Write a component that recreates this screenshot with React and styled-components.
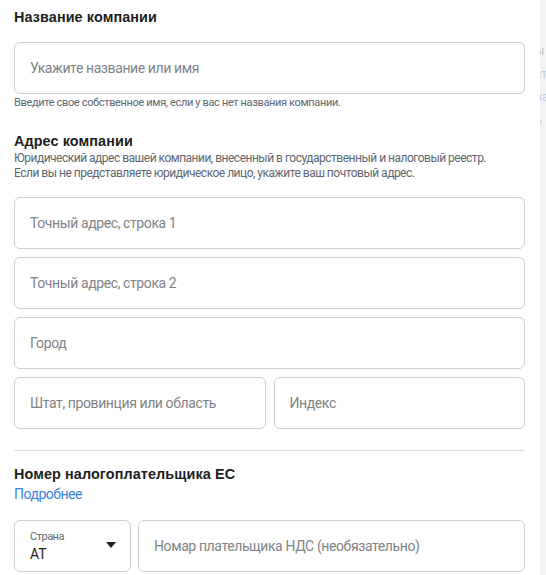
import styled, { createGlobalStyle } from "styled-components";

const GlobalStyle = createGlobalStyle`
    body {
        margin: 0;
        background: #ffffff;
        font-family: Roboto, "Liberation Sans", Arial, sans-serif;
        color: #1c1e21;
    }
`;

const Page = styled.div`
    display: flex;
    width: 546px;
    height: 575px;
    overflow: hidden;
`;

const Form = styled.main`
    width: 540px;
    box-sizing: border-box;
    padding: 7px 15px 0 14px;
    background: #ffffff;
    display: flex;
    flex-direction: column;
`;

const Side = styled.aside`
    flex: 1;
    background: #f2f3f5;
    overflow: hidden;
    display: flex;
    flex-direction: column;
    padding-top: 44px;
    gap: 9px;
`;

const SideText = styled.span`
    margin-left: -5px;
    font-family: Roboto, Arial, sans-serif;
    font-size: 12px;
    line-height: 14px;
    color: ${(p) => (p.$link ? "#b9cbe4" : "#c3c6cb")};
    white-space: nowrap;
`;

const Title = styled.h2`
    margin: ${(p) => p.$margin || "0"};
    font-family: "Liberation Sans", Arial, sans-serif;
    font-weight: 700;
    font-size: 14.4px;
    line-height: 20px;
    letter-spacing: 0.1px;
    color: #1c1e21;
`;

const Help = styled.p`
    margin: ${(p) => p.$margin || "0"};
    font-size: ${(p) => (p.$small ? "11px" : "12px")};
    line-height: ${(p) => (p.$small ? "14px" : "15px")};
    letter-spacing: ${(p) => (p.$small ? "-0.35px" : "-0.5px")};
    color: #606770;
`;

const Field = styled.div`
    box-sizing: border-box;
    height: 52px;
    border: 1px solid #ccd0d5;
    border-radius: 6px;
    background: #ffffff;
    display: flex;
    align-items: center;
    padding: 0 15px;
    min-width: 0;
    flex: ${(p) => p.$flex || "initial"};
`;

const Placeholder = styled.span`
    font-size: 14px;
    letter-spacing: -0.4px;
    color: #808387;
    white-space: nowrap;
`;

const Stack = styled.div`
    display: flex;
    flex-direction: column;
    gap: 8px;
    margin-top: ${(p) => p.$top || "0"};
`;

const Row = styled.div`
    display: flex;
    gap: ${(p) => p.$gap || "8px"};
`;

const Divider = styled.hr`
    margin: 21px 0 13px;
    border: none;
    border-top: 1px solid #dadde1;
    height: 0;
`;

const Link = styled.a`
    font-size: 14px;
    letter-spacing: -0.5px;
    line-height: 20px;
    color: #3b82e0;
    text-decoration: none;
    align-self: flex-start;
    margin-bottom: 16px;
`;

const Select = styled.div`
    box-sizing: border-box;
    width: 117px;
    height: 52px;
    border: 1px solid #ccd0d5;
    border-radius: 6px;
    display: flex;
    align-items: center;
    justify-content: space-between;
    padding: 0 14px 0 15px;
`;

const SelectValue = styled.div`
    display: flex;
    flex-direction: column;
    padding-top: 2px;
`;

const SelectLabel = styled.span`
    font-size: 11px;
    letter-spacing: -0.5px;
    line-height: 14px;
    color: #606770;
`;

const SelectText = styled.span`
    font-size: 14px;
    line-height: 20px;
    color: #1c1e21;
`;

const Caret = styled.svg`
    width: 10px;
    height: 6px;
    fill: #1c1e21;
    margin-bottom: 2px;
`;

function App() {
    return (
        <Page>
            <GlobalStyle />
            <Form>
                <Title>Название компании</Title>
                <Stack $top="15px">
                    <Field>
                        <Placeholder>Укажите название или имя</Placeholder>
                    </Field>
                </Stack>
                <Help $small $margin="2px 0 0">
                    Введите свое собственное имя, если у вас нет названия компании.
                </Help>

                <Title $margin="21px 0 0">Адрес компании</Title>
                <Help>
                    Юридический адрес вашей компании, внесенный в государственный и налоговый реестр.
                    <br />
                    Если вы не представляете юридическое лицо, укажите ваш почтовый адрес.
                </Help>
                <Stack $top="16px">
                    <Field>
                        <Placeholder>Точный адрес, строка 1</Placeholder>
                    </Field>
                    <Field>
                        <Placeholder>Точный адрес, строка 2</Placeholder>
                    </Field>
                    <Field>
                        <Placeholder>Город</Placeholder>
                    </Field>
                    <Row>
                        <Field $flex="1">
                            <Placeholder>Штат, провинция или область</Placeholder>
                        </Field>
                        <Field $flex="1">
                            <Placeholder>Индекс</Placeholder>
                        </Field>
                    </Row>
                </Stack>

                <Divider />

                <Title>Номер налогоплательщика ЕС</Title>
                <Link href="#">Подробнее</Link>
                <Row $gap="7px">
                    <Select>
                        <SelectValue>
                            <SelectLabel>Страна</SelectLabel>
                            <SelectText>AT</SelectText>
                        </SelectValue>
                        <Caret viewBox="0 0 10 6">
                            <path d="M0 0h10L5 6z" />
                        </Caret>
                    </Select>
                    <Field $flex="1">
                        <Placeholder>Номар плательщика НДС (необязательно)</Placeholder>
                    </Field>
                </Row>
            </Form>
            <Side>
                <SideText>ы</SideText>
                <SideText $link>ст</SideText>
                <SideText $link>на</SideText>
                <SideText $link>ь</SideText>
            </Side>
        </Page>
    );
}

export default App;
